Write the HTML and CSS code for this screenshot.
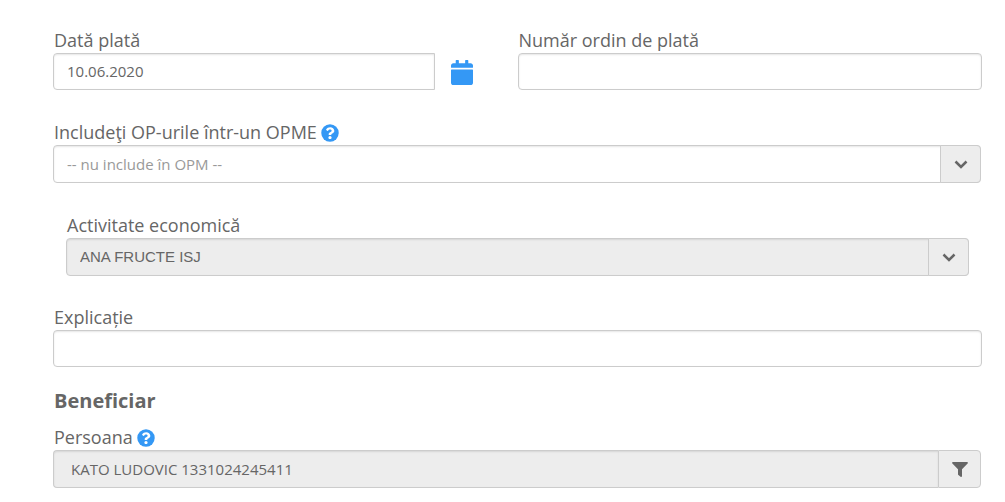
FILE: index.html
```html
<!DOCTYPE html>
<html lang="ro">
<head>
<meta charset="UTF-8">
<meta name="viewport" content="width=device-width, initial-scale=1.0">
<title>Ordin de plată</title>
<link rel="stylesheet" href="styles.css">
</head>
<body>

<form class="payment-form" method="post">
  <div class="row">
    <div class="form-group date-group">
      <label for="data_plata">Dată plată</label>
      <div class="date-field">
        <input type="text" class="form-control date-input" id="data_plata" name="data_plata" value="10.06.2020">
        <button type="button" class="calendar-btn" aria-label="Calendar">
          <svg viewBox="0 0 448 512" preserveAspectRatio="none" width="22" height="25"><path fill="currentColor" d="M12 192h424c6.600 0 12 5.400 12 12v260c0 26.500-21.500 48-48 48H48c-26.500 0-48-21.500-48-48V204c0-6.600 5.400-12 12-12zm436-44v-36c0-26.500-21.500-48-48-48h-48V12c0-6.600-5.400-12-12-12h-40c-6.600 0-12 5.400-12 12v52H160V12c0-6.600-5.400-12-12-12h-40c-6.600 0-12 5.400-12 12v52H48C21.500 64 0 85.500 0 112v36c0 6.600 5.400 12 12 12h424c6.600 0 12-5.400 12-12z"/></svg>
        </button>
      </div>
    </div>
    <div class="form-group number-group">
      <label for="numar_op">Număr ordin de plată</label>
      <input type="text" class="form-control" id="numar_op" name="numar_op">
    </div>
  </div>

  <div class="form-group">
    <label for="opme"><span lang="en">Includeţi OP-urile într-un OPME</span>
      <svg class="help" viewBox="0 0 512 512" width="18" height="18"><circle cx="256" cy="256" r="248" fill="#3498f5"/><path fill="#fff" d="M262.700 90c-54.500 0-89.300 23-116.500 63.800-3.500 5.300-2.400 12.400 2.700 16.300l34.700 26.300c5.200 3.900 12.600 3 16.700-2.100 17.900-22.700 30.100-35.800 57.300-35.800 20.400 0 45.700 13.100 45.700 33 0 15-12.400 22.700-32.500 34C247.100 238.500 216 254.900 216 296v4c0 6.600 5.400 12 12 12h56c6.600 0 12-5.400 12-12v-1.300c0-28.500 83.200-29.600 83.200-106.700 0-58-60.200-102-116.500-102zM256 338c-25.400 0-46 20.600-46 46s20.600 46 46 46 46-20.600 46-46-20.600-46-46-46z"/></svg>
    </label>
    <div class="select-wrap">
      <select class="form-control placeholder" id="opme" name="opme">
        <option>-- nu include în OPM --</option>
      </select>
      <span class="addon arrow">
        <svg viewBox="0 0 14 9" width="14" height="9"><path fill="none" stroke="currentColor" stroke-width="2.500" d="M1.500 1.500 7 7l5.500-5.500"/></svg>
      </span>
    </div>
  </div>

  <div class="form-group inset">
    <label for="activitate">Activitate economică</label>
    <div class="select-wrap">
      <select class="form-control activity" id="activitate" name="activitate" disabled>
        <option>ANA FRUCTE ISJ</option>
      </select>
      <span class="addon arrow">
        <svg viewBox="0 0 14 9" width="14" height="9"><path fill="none" stroke="currentColor" stroke-width="2.500" d="M1.500 1.500 7 7l5.500-5.500"/></svg>
      </span>
    </div>
  </div>

  <div class="form-group">
    <label for="explicatie">Explicație</label>
    <input type="text" class="form-control" id="explicatie" name="explicatie">
  </div>

  <h2>Beneficiar</h2>

  <div class="form-group">
    <label for="persoana">Persoana
      <svg class="help" viewBox="0 0 512 512" width="18" height="18"><circle cx="256" cy="256" r="248" fill="#3498f5"/><path fill="#fff" d="M262.700 90c-54.500 0-89.300 23-116.500 63.800-3.500 5.300-2.400 12.400 2.700 16.300l34.700 26.300c5.200 3.900 12.600 3 16.700-2.100 17.900-22.700 30.100-35.800 57.300-35.800 20.400 0 45.700 13.100 45.700 33 0 15-12.400 22.700-32.500 34C247.100 238.500 216 254.900 216 296v4c0 6.600 5.400 12 12 12h56c6.600 0 12-5.400 12-12v-1.300c0-28.500 83.200-29.600 83.200-106.700 0-58-60.200-102-116.500-102zM256 338c-25.400 0-46 20.600-46 46s20.600 46 46 46 46-20.600 46-46-20.600-46-46-46z"/></svg>
    </label>
    <div class="input-group">
      <input type="text" class="form-control person" id="persoana" name="persoana" value="KATO LUDOVIC 1331024245411" disabled>
      <button type="button" class="addon" aria-label="Filtru">
        <svg viewBox="0 0 16 15" width="16" height="15"><path fill="currentColor" d="M1 0h14c.9 0 1.200 1 .6 1.600L10 7.300V14c0 .8-.8 1.200-1.400.7L6.400 13a1 1 0 0 1-.4-.8V7.300L.4 1.600C-.2 1 .1 0 1 0z"/></svg>
      </button>
    </div>
  </div>
</form>

</body>
</html>
```
FILE: styles.css
```css
* {
  box-sizing: border-box;
}

body {
  margin: 0;
  background-color: #fff;
  color: #666;
  font-family: "Open Sans", sans-serif;
  font-size: 18px;
}

.payment-form {
  padding: 28px 23px 14px 53px;
}

.row {
  display: flex;
}

.form-group {
  margin-bottom: 30px;
}

.form-group:last-child {
  margin-bottom: 0;
}

.date-group {
  flex: 1;
  margin-right: 45px;
}

.number-group {
  flex: 0 0 50%;
}

.inset {
  margin-left: 13px;
  margin-right: 12px;
  margin-bottom: 29px;
}

label {
  display: flex;
  align-items: center;
  gap: 4px;
  height: 25px;
  padding-left: 1px;
  line-height: 25px;
}

.help {
  flex: none;
}

.form-control {
  display: block;
  width: 100%;
  height: 37px;
  margin: 0;
  padding: 0 13px 2px;
  border: 1px solid #ccc;
  border-radius: 4px;
  background-color: #fff;
  box-shadow: inset 0 1px 2px rgba(0, 0, 0, 0.1);
  color: #666;
  font-family: "Open Sans", sans-serif;
  font-size: 15px;
}

.form-control:disabled {
  background-color: #ededed;
  opacity: 1;
}

.date-field {
  display: flex;
  align-items: center;
}

.date-input {
  flex: 1;
  min-width: 0;
  border-radius: 4px 0 0 4px;
}

.calendar-btn {
  display: flex;
  margin-left: 16px;
  padding: 2px 0 0;
  border: none;
  background: none;
  color: #3498f5;
  cursor: pointer;
}

.select-wrap {
  position: relative;
  margin-right: 1px;
}

select.form-control {
  height: 38px;
  padding-right: 50px;
  padding-bottom: 0;
  appearance: none;
}

.form-control.placeholder {
  color: #999;
}

.form-control.activity {
  padding-bottom: 2px;
  font-family: "Liberation Sans", Arial, sans-serif;
}

.addon {
  display: flex;
  align-items: center;
  justify-content: center;
  width: 43px;
  padding: 0;
  border: 1px solid #ccc;
  border-radius: 0 4px 4px 0;
  background-color: #ededed;
  color: #666;
}

/* sits over the right end of the select */
.arrow {
  position: absolute;
  top: 0;
  right: 0;
  bottom: 0;
  width: 41px;
  pointer-events: none;
}

h2 {
  margin: -10px 0 10px;
  padding-left: 1px;
  font-size: 20px;
  line-height: 28px;
}

.input-group {
  display: flex;
  margin-right: 1px;
}

.person {
  flex: 1;
  min-width: 0;
  height: 38px;
  padding-left: 17px;
  padding-bottom: 0;
  border-right: none;
  border-radius: 4px 0 0 4px;
}
```
